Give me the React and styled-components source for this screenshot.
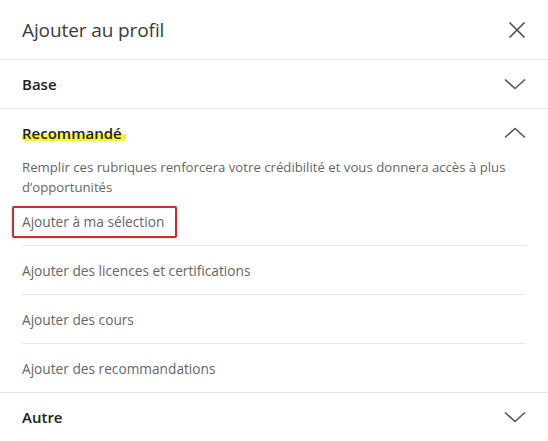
import React from "react";
import styled, { createGlobalStyle } from "styled-components";

const Global = createGlobalStyle`
  html, body { margin: 0; padding: 0; background: #fff; }
  body { font-family: "Open Sans", "Noto Sans", sans-serif; }
`;

const Modal = styled.div`
  width: 548px;
  height: 441px;
  background: #fff;
  overflow: hidden;
  display: flex;
  flex-direction: column;
`;

const Header = styled.div`
  height: 59px;
  border-bottom: 1px solid #e6e6e6;
  display: flex;
  align-items: center;
  justify-content: space-between;
  padding: 0 22px;
  flex-shrink: 0;
`;

const Title = styled.h1`
  margin: 0;
  font-size: 19px;
  font-weight: 400;
  color: #3b3b3b;
  letter-spacing: -0.1px;
`;

const IconBtn = styled.button`
  border: 0;
  background: none;
  padding: 0;
  display: flex;
  align-items: center;
  justify-content: center;
  color: #555;
  cursor: pointer;
`;

const SectionHeader = styled.div`
  height: 48px;
  display: flex;
  align-items: center;
  justify-content: space-between;
  padding: 0 22px;
  border-bottom: ${(p) => (p.$border ? "1px solid #e6e6e6" : "none")};
  flex-shrink: 0;
`;

const SectionTitle = styled.span`
  font-size: 15px;
  font-weight: 600;
  color: #222;
`;

const Marker = styled.span`
  background: linear-gradient(transparent 56%, #f6f63a 56%, #f6f63a 92%, transparent 92%);
  padding-right: 4px;
`;

const Section = styled.div`
  border-bottom: 1px solid #e6e6e6;
  flex-shrink: 0;
`;

const Description = styled.p`
  margin: 0;
  padding: 1px 22px 0;
  height: 39px;
  font-size: 13.2px;
  line-height: 19.5px;
  color: #666;
`;

const ItemList = styled.ul`
  list-style: none;
  margin: 0;
  padding: 0;
`;

const Item = styled.li`
  position: relative;
  margin: 0 22px;
  height: 48px;
  display: flex;
  align-items: center;
  font-size: 13.7px;
  color: #666;
  border-bottom: ${(p) => (p.$last ? "none" : "1px solid #e8e8e8")};
  &::after {
    content: "";
    display: ${(p) => (p.$boxed ? "block" : "none")};
    position: absolute;
    left: -10px;
    top: 9px;
    width: 165px;
    height: 32px;
    box-sizing: border-box;
    border: 2px solid #cf2a30;
    border-radius: 2px;
    box-shadow: 0 0 2px rgba(207, 42, 48, 0.35);
  }
`;

const Chevron = ({ up }) => (
  <svg width="22" height="12" viewBox="0 0 22 12" fill="none">
    <polyline
      points={up ? "1,10.5 11,1.5 21,10.5" : "1,1.5 11,10.5 21,1.5"}
      stroke="#555"
      strokeWidth="1.6"
      strokeLinejoin="miter"
    />
  </svg>
);

const Close = () => (
  <svg width="18" height="18" viewBox="0 0 18 18" fill="none">
    <path d="M1.5 1.5 L16.5 16.5 M16.5 1.5 L1.5 16.5" stroke="#555" strokeWidth="1.7" />
  </svg>
);

export default function App() {
  const items = [
    "Ajouter à ma sélection",
    "Ajouter des licences et certifications",
    "Ajouter des cours",
    "Ajouter des recommandations",
  ];
  return (
    <>
      <Global />
      <Modal>
        <Header>
          <Title>Ajouter au profil</Title>
          <IconBtn aria-label="Fermer">
            <Close />
          </IconBtn>
        </Header>
        <SectionHeader $border>
          <SectionTitle>Base</SectionTitle>
          <Chevron />
        </SectionHeader>
        <Section>
          <SectionHeader>
            <SectionTitle>
              <Marker>Recommandé</Marker>
            </SectionTitle>
            <Chevron up />
          </SectionHeader>
          <Description>
            Remplir ces rubriques renforcera votre crédibilité et vous donnera accès à plus
            d’opportunités
          </Description>
          <ItemList>
            {items.map((t, i) => (
              <Item key={t} $boxed={i === 0} $last={i === items.length - 1}>
                {t}
              </Item>
            ))}
          </ItemList>
        </Section>
        <SectionHeader>
          <SectionTitle>Autre</SectionTitle>
          <Chevron />
        </SectionHeader>
      </Modal>
    </>
  );
}
